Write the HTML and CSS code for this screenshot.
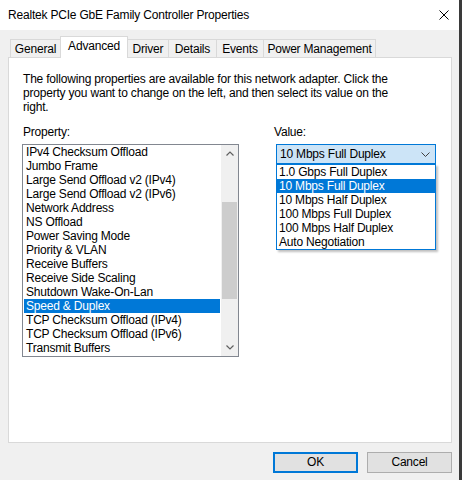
FILE: index.html
```html
<!DOCTYPE html>
<html>
<head>
<meta charset="utf-8">
<link rel="stylesheet" href="styles.css">
</head>
<body>
<div class="screen">
  <div class="window">
    <div class="titlebar">
      <span class="title">Realtek PCIe GbE Family Controller Properties</span>
      <svg class="close" width="10" height="10" viewBox="0 0 10 10"><path d="M0.5 0.5 L9.5 9.5 M9.5 0.5 L0.5 9.5" stroke="#000" stroke-width="1" fill="none"/></svg>
    </div>
    <div class="tabs">
      <div class="tab t-general">General</div>
      <div class="tab tab-active t-adv">Advanced</div>
      <div class="tab t-driver">Driver</div>
      <div class="tab t-details">Details</div>
      <div class="tab t-events">Events</div>
      <div class="tab t-power">Power Management</div>
    </div>
    <div class="panel">
      <p class="desc">The following properties are available for this network adapter. Click the property you want to change on the left, and then select its value on the right.</p>
      <div class="columns">
        <div class="col-left">
          <div class="label">Property:</div>
          <div class="listbox">
            <div class="items">
              <div class="item">IPv4 Checksum Offload</div>
              <div class="item">Jumbo Frame</div>
              <div class="item">Large Send Offload v2 (IPv4)</div>
              <div class="item">Large Send Offload v2 (IPv6)</div>
              <div class="item">Network Address</div>
              <div class="item">NS Offload</div>
              <div class="item">Power Saving Mode</div>
              <div class="item">Priority &amp; VLAN</div>
              <div class="item">Receive Buffers</div>
              <div class="item">Receive Side Scaling</div>
              <div class="item">Shutdown Wake-On-Lan</div>
              <div class="item item-sel">Speed &amp; Duplex</div>
              <div class="item">TCP Checksum Offload (IPv4)</div>
              <div class="item">TCP Checksum Offload (IPv6)</div>
              <div class="item">Transmit Buffers</div>
            </div>
            <div class="scrollbar">
              <div class="sb-btn"><svg width="8" height="5" viewBox="0 0 8 5"><path d="M0.5 4.5 L4 1 L7.5 4.5" stroke="#606060" stroke-width="1.2" fill="none"/></svg></div>
              <div class="sb-track">
                <div class="sb-pre"></div>
                <div class="sb-thumb"></div>
              </div>
              <div class="sb-btn"><svg width="8" height="5" viewBox="0 0 8 5"><path d="M0.5 0.5 L4 4 L7.5 0.5" stroke="#606060" stroke-width="1.2" fill="none"/></svg></div>
            </div>
          </div>
        </div>
        <div class="col-right">
          <div class="label">Value:</div>
          <div class="combo-wrap">
            <div class="combo">
              <span>10 Mbps Full Duplex</span>
              <svg class="chev" width="9" height="5" viewBox="0 0 9 5"><path d="M0.5 0.5 L4.5 4.5 L8.5 0.5" stroke="#404040" stroke-width="1" fill="none"/></svg>
            </div>
            <div class="dropdown">
              <div class="ditem">1.0 Gbps Full Duplex</div>
              <div class="ditem ditem-sel">10 Mbps Full Duplex</div>
              <div class="ditem">10 Mbps Half Duplex</div>
              <div class="ditem">100 Mbps Full Duplex</div>
              <div class="ditem">100 Mbps Half Duplex</div>
              <div class="ditem">Auto Negotiation</div>
            </div>
          </div>
        </div>
      </div>
    </div>
    <div class="buttons">
      <div class="btn btn-default">OK</div>
      <div class="btn">Cancel</div>
    </div>
  </div>
  <div class="behind"></div>
</div>
</body>
</html>
```
FILE: styles.css
```css
html, body {
  margin: 0;
  padding: 0;
}
body {
  font-family: "Liberation Sans", Arial, sans-serif;
  font-size: 12px;
  letter-spacing: -0.2px;
  color: #000;
  background: #f0f0f0;
}
.screen {
  display: flex;
  width: 462px;
  height: 480px;
  overflow: hidden;
}
.window {
  width: 459px;
  height: 480px;
  background: #f0f0f0;
  display: flex;
  flex-direction: column;
}
.behind {
  width: 3px;
  height: 480px;
  background: #3a3a3a;
}
.titlebar {
  height: 30px;
  background: #fff;
  display: flex;
  align-items: center;
  justify-content: space-between;
  padding: 0 10px 0 8px;
}
.close {
  display: block;
}
.tabs {
  display: flex;
  align-items: flex-end;
  margin-top: 7px;
  padding-left: 10px;
  height: 21px;
  position: relative;
  z-index: 2;
}
.tab {
  height: 17px;
  border: 1px solid #d9d9d9;
  border-bottom: none;
  margin-left: -1px;
  background: #f0f0f0;
  text-align: center;
  line-height: 19px;
  box-sizing: content-box;
  margin-bottom: 1px;
}
.tab:first-child {
  margin-left: 0;
}
.t-general { width: 49px; }
.t-adv { width: 66px; }
.t-driver { width: 40px; }
.t-details { width: 47px; }
.t-events { width: 46px; }
.t-power { width: 111px; }
.tab-active {
  height: 21px;
  background: #fff;
  line-height: 18px;
  margin-bottom: 0;
  z-index: 3;
  position: relative;
}
.panel {
  margin: -1px 7px 0 8px;
  height: 370px;
  background: #fff;
  border: 1px solid #d9d9d9;
  padding: 14px 0 0 13px;
  width: 429px;
}
.desc {
  margin: 0;
  padding-left: 1px;
  line-height: 14px;
  width: 385px;
}
.columns {
  display: flex;
  margin-top: 11px;
}
.col-left {
  width: 217px;
}
.col-right {
  margin-left: 34px;
}
.label {
  height: 14px;
  line-height: 14px;
  padding-left: 1px;
  margin-bottom: 5px;
}
.listbox {
  border: 1px solid #828790;
  height: 211px;
  display: flex;
  background: #fff;
}
.items {
  flex: 1;
}
.item {
  height: 14px;
  line-height: 15px;
  padding-left: 3px;
  white-space: nowrap;
}
.item-sel {
  background: #0078d7;
  color: #fff;
  margin: 0 1px;
  padding-left: 2px;
}
.scrollbar {
  width: 17px;
  background: #f0f0f0;
  display: flex;
  flex-direction: column;
}
.sb-btn {
  height: 17px;
  display: flex;
  align-items: center;
  justify-content: center;
}
.sb-track {
  flex: 1;
  display: flex;
  flex-direction: column;
}
.sb-pre {
  height: 40px;
}
.sb-thumb {
  height: 97px;
  background: #cdcdcd;
  margin: 0 1px;
}
.combo-wrap {
  position: relative;
  margin-left: 3px;
  width: 160px;
}
.combo {
  height: 18px;
  border: 1px solid #0078d7;
  background: #cce4f7;
  display: flex;
  align-items: center;
  justify-content: space-between;
  padding: 0 5px 0 3px;
}
.chev {
  display: block;
}
.dropdown {
  position: absolute;
  left: 0;
  top: 20px;
  width: 158px;
  height: 84px;
  border: 1px solid #0078d7;
  background: #fff;
  box-shadow: 2px 2px 2px rgba(0,0,0,0.25);
}
.ditem {
  height: 14px;
  line-height: 15px;
  padding-left: 2px;
  white-space: nowrap;
}
.ditem-sel {
  background: #0078d7;
  color: #fff;
}
.buttons {
  display: flex;
  justify-content: flex-end;
  gap: 9px;
  padding-right: 7px;
  margin-top: 9px;
}
.btn {
  width: 83px;
  height: 19px;
  border: 1px solid #adadad;
  background: #e1e1e1;
  text-align: center;
  line-height: 19px;
}
.btn-default {
  border-color: #0078d7;
  box-shadow: inset 0 0 0 1px #0078d7;
}
```
